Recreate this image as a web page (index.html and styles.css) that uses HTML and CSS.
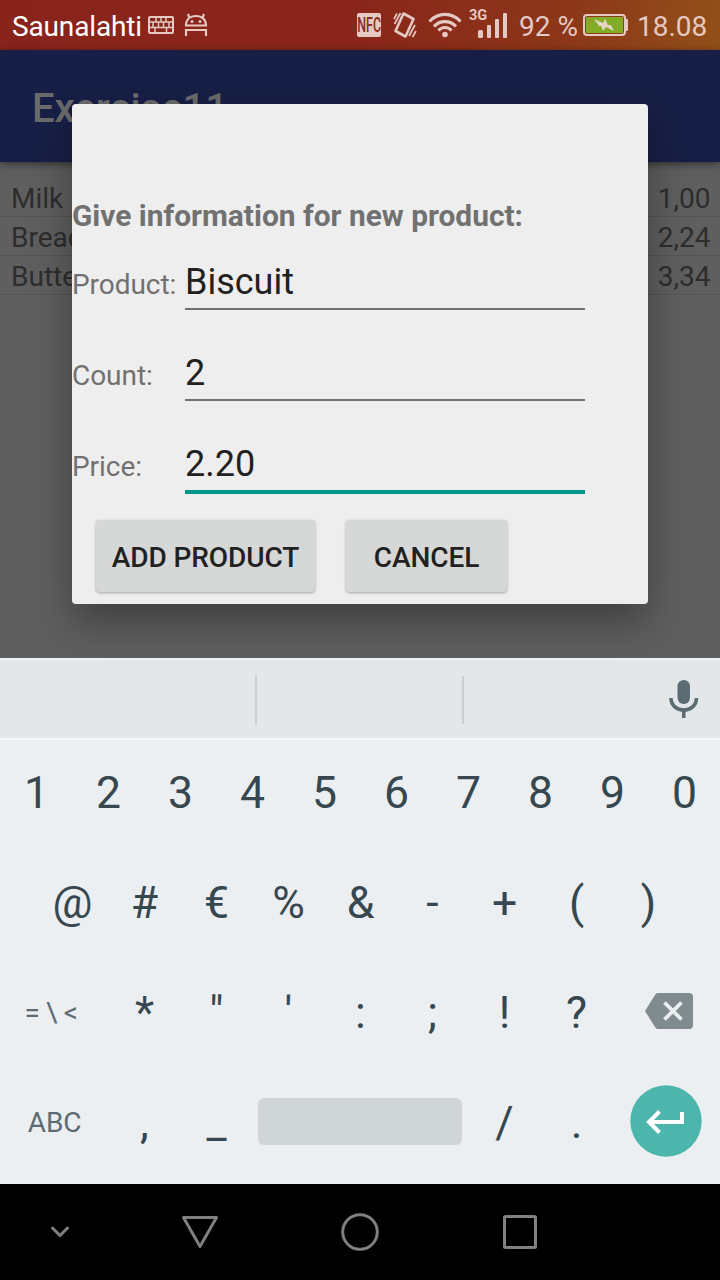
FILE: index.html
```html
<!DOCTYPE html>
<html lang="en">
<head>
<meta charset="utf-8">
<title>Exercise11</title>
<link rel="stylesheet" href="styles.css">
</head>
<body>
<div class="screen">
  <header class="status">
    <span class="carrier">Saunalahti</span>
    <svg class="ic-keyboard" width="26" height="18" viewBox="0 0 26 18" fill="none" stroke="currentColor" stroke-width="1.5"><rect x="1" y="1" width="24" height="16" rx="1" stroke-width="2"/><path d="M1 6H25M1 11.500H25M8 1V6M13 1V6M18 1V6M5 6V11.500M10.500 6V11.500M15.500 6V11.500M21 6V11.500M7 12V17M18.500 12V17"/></svg>
    <svg class="ic-android" width="24" height="24" viewBox="0 0 24 24" fill="none" stroke="currentColor" stroke-width="2.200"><path d="M2 12.500C2 6.500 6 3 12 3S22 6.500 22 12.500ZM5.500 5L4 1M18.500 5L20 1M2 23V17H22V23"/><circle cx="8" cy="8.500" r="1.500" fill="currentColor" stroke="none"/><circle cx="16" cy="8.500" r="1.500" fill="currentColor" stroke="none"/></svg>
    <span class="nfc"><span>NFC</span></span>
    <svg class="ic-vibrate" width="24" height="26" viewBox="0 0 24 26" fill="none" stroke="currentColor" stroke-width="2"><path d="M10.500 1.500L20.500 7L12.500 24.500L2.500 19Z" stroke-width="2.600" stroke-linejoin="round"/><path d="M7.500 1L1.500 12M4 1.500L1 7M22 13L16 24M23 19L19.500 25" stroke-width="1.700"/></svg>
    <svg class="ic-wifi" width="34" height="26" viewBox="0 0 34 26" fill="none" stroke="currentColor" stroke-width="3.200"><path d="M1.500 9.500C10 .0 24 .0 32.500 9.500M6 14.500C12 8 22 8 28 14.500M10.500 18.500C14 14.500 20 14.500 23.500 18.500"/><circle cx="17" cy="22.500" r="2.800" fill="currentColor" stroke="none"/></svg>
    <span class="signal"><span class="net">3G</span><svg width="30" height="26" viewBox="0 0 30 26" fill="currentColor"><rect x="0" y="18" width="5" height="8" rx="1.500"/><rect x="9" y="13" width="4" height="13" rx="1"/><rect x="17" y="7" width="4" height="19" rx="1"/><rect x="25" y="1" width="4" height="25" rx="1"/></svg></span>
    <span class="percent">92 %</span>
    <svg class="ic-battery" width="45" height="22" viewBox="0 0 45 22"><rect x="1" y="1" width="41" height="20" rx="3" fill="none" stroke="#e5c9c2" stroke-width="2"/><rect x="42" y="5" width="3" height="12" rx="1" fill="#e5c9c2"/><rect x="3" y="3" width="37" height="16" fill="#81ac25"/><path d="M11 5L20 9L22 5L25 11H28L31 17L23 13L20 17L18 12H16Z" fill="#e5d5c2"/></svg>
    <span class="clock">18.08</span>
  </header>
  <div class="appbar">Exercise11</div>
  <main class="content">
    <div class="item"><span>Milk</span><span>1,00</span></div>
    <div class="item"><span>Bread</span><span>2,24</span></div>
    <div class="item"><span>Butter</span><span>3,34</span></div>
  </main>
  <section class="dialog">
    <h1 class="heading">Give information for new product:</h1>
    <div class="field"><label>Product:</label><div class="input">Biscuit</div></div>
    <div class="field"><label>Count:</label><div class="input">2</div></div>
    <div class="field"><label>Price:</label><div class="input focused">2.20</div></div>
    <div class="actions"><button class="btn add">ADD PRODUCT</button><button class="btn cancel">CANCEL</button></div>
  </section>
  <section class="keyboard">
    <div class="suggest">
      <div class="slot"></div><div class="slot"></div>
      <svg class="mic" width="30" height="40" viewBox="0 0 30 40"><rect x="8.500" y="1" width="12.500" height="24" rx="6.200" fill="#5d6b73"/><path d="M2 19C2 35 27.500 35 27.500 19M14.750 30V39" fill="none" stroke="#5d6b73" stroke-width="3.600"/></svg>
    </div>
    <div class="keys"><span>1</span><span>2</span><span>3</span><span>4</span><span>5</span><span>6</span><span>7</span><span>8</span><span>9</span><span>0</span></div>
    <div class="keys inset"><span>@</span><span>#</span><span>€</span><span>%</span><span>&amp;</span><span>-</span><span>+</span><span>(</span><span>)</span></div>
    <div class="keys"><span class="wide sym">= \ &lt;</span><span>*</span><span>"</span><span>'</span><span>:</span><span>;</span><span>!</span><span>?</span><span class="wide back"><svg width="48" height="36" viewBox="0 0 48 36"><path d="M13 0H44Q48 0 48 4V32Q48 36 44 36H13Q11 36 10 34L0 18L10 2Q11 0 13 0Z" fill="#808b8f"/><path d="M19.500 9.500L36.500 26.500M36.500 9.500L19.500 26.500" stroke="#ebeef1" stroke-width="3.800"/></svg></span></div>
    <div class="keys"><span class="wide abc">ABC</span><span>,</span><span>_</span><span class="space"></span><span>/</span><span>.</span><span class="wide enter"><svg width="72" height="72" viewBox="0 0 72 72"><circle cx="36" cy="36" r="35.700" fill="#4db6ac"/><path d="M52 27V37H19M29.500 26.500L19 37L29.500 47.500" fill="none" stroke="#fff" stroke-width="4"/></svg></span></div>
  </section>
  <nav class="navbar">
    <svg class="nav-small" width="20" height="14" viewBox="0 0 20 14"><path d="M2.500 3L10 10.500L17.500 3"/></svg>
    <svg class="nav-back" width="40" height="36" viewBox="0 0 40 36"><path d="M3.500 3.500H36.500L20 32.500Z"/></svg>
    <svg class="nav-home" width="40" height="40" viewBox="0 0 40 40"><circle cx="20" cy="20" r="17.300"/></svg>
    <svg class="nav-recent" width="36" height="36" viewBox="0 0 36 36"><rect x="2.500" y="2.500" width="31" height="31" rx="1"/></svg>
  </nav>
</div>
</body>
</html>
```
FILE: styles.css
```css
* { box-sizing: border-box; }
body { margin: 0; font-family: Roboto, sans-serif; }
.screen { position: relative; width: 720px; height: 1280px; display: flex; flex-direction: column; overflow: hidden; background: #5f5f5f; }
.status { height: 50px; flex: none; display: flex; align-items: center; padding: 0 0 0 12px; font-size: 28px; line-height: 48px; color: #e5c9c2; white-space: nowrap; background: linear-gradient(100deg, #89241c 0%, #8a261b 50%, #8c3719 78%, #925019 100%); }
.status svg { flex: none; display: block; }
.carrier { width: 136px; color: #fff; padding-top: 4px; letter-spacing: -.15px; }
.ic-android { margin-left: 10px; }
.nfc { width: 24px; height: 24px; margin-left: 149px; border-radius: 2px; background: #e5c9c2; color: #8a2b1b; font-size: 20px; line-height: 25px; font-weight: 500; display: flex; justify-content: center; }
.nfc span { transform: scaleX(.62); }
.ic-vibrate { margin-left: 12px; }
.ic-wifi { margin-left: 11px; }
.signal { position: relative; margin-left: 16px; }
.net { position: absolute; left: -9px; top: -4px; font-size: 14.5px; line-height: 16px; font-weight: 700; }
.percent { width: 65px; margin-left: 11px; padding-top: 4px; }
.ic-battery { margin-left: -1px; }
.clock { margin-left: 9px; padding-top: 4px; }
.appbar { height: 112px; flex: none; padding: 4px 32px 0; background: #181f46; color: #6b6b6b; font-size: 40px; font-weight: 500; line-height: 110px; box-shadow: 0 2px 8px rgba(0,0,0,.5); }
.content { height: 496px; flex: none; padding-top: 16px; }
.item { height: 39px; display: flex; justify-content: space-between; padding: 0 9.5px 0 11px; border-bottom: 1px solid #545454; color: #2d2d2d; font-size: 28px; line-height: 42px; }
.dialog { position: absolute; left: 72px; top: 104px; width: 576px; height: 500px; padding-top: 92px; border-radius: 4px; background: #eee; box-shadow: 0 18px 40px rgba(0,0,0,.34); }
.heading { margin: 0 0 18px; font-size: 29.9px; font-weight: 700; line-height: 40px; color: #717171; }
.field { height: 91px; display: flex; align-items: flex-start; }
.field label { width: 113px; font-size: 28px; line-height: 62px; letter-spacing: -.05px; color: #717171; }
.input { width: 400px; padding: 7px 0 5px; border-bottom: 2px solid #717171; color: #212121; font-size: 36px; line-height: 42px; }
.input.focused { border-bottom: 4px solid #009688; }
.actions { display: flex; gap: 31px; margin: -7px 0 0 24px; }
.btn { height: 72px; padding: 3px 0 0; border: 0; border-radius: 4px; background: #d6d8d7; color: #212121; font: 500 28px Roboto, sans-serif; letter-spacing: -.1px; box-shadow: 0 1px 3px rgba(0,0,0,.32); }
.add { width: 219px; }
.cancel { width: 161px; }
.keyboard { position: relative; height: 526px; flex: none; background: #ebeff2; }
.suggest { height: 82px; display: flex; align-items: center; background: #e3e7ea; border-top: 2px solid #eef0f1; border-bottom: 2px solid #f5f7f8; }
.slot { height: 48px; width: 207px; margin-top: 2px; border-right: 2px solid #c9cfd3; }
.slot:first-child { width: 257px; }
.mic { margin-left: 205px; }
.keys { height: 110px; display: flex; align-items: center; padding-bottom: 4px; color: #37474f; font-size: 44.5px; line-height: 52px; }
.inset { padding: 0 36px 4px; }
.keys span { width: 72px; padding-left: 1px; text-align: center; }
.keys .wide { width: 108px; color: #5d6b73; font-size: 28px; }
.keys .sym { padding-right: 6px; padding-left: 0; font-size: 28px; letter-spacing: -.4px; white-space: pre; }
.keys .abc { letter-spacing: -.2px; }
.keys .back { padding: 0 0 4px 6px; }
.keys .space { width: 204px; height: 47px; margin: 0 6px 4px; border-radius: 6px; background: #d0d5d8; }
.keys svg { display: block; margin: auto; }
.keys .enter { padding: 0 0 4px; }
.navbar { height: 96px; flex: none; display: flex; align-items: center; padding-left: 50px; background: #000; }
.navbar svg { fill: none; stroke: #808080; stroke-width: 3; stroke-linecap: round; stroke-linejoin: round; }
.nav-back { margin-left: 110px; }
.nav-home { margin-left: 120px; }
.nav-recent { margin-left: 122px; }
```
